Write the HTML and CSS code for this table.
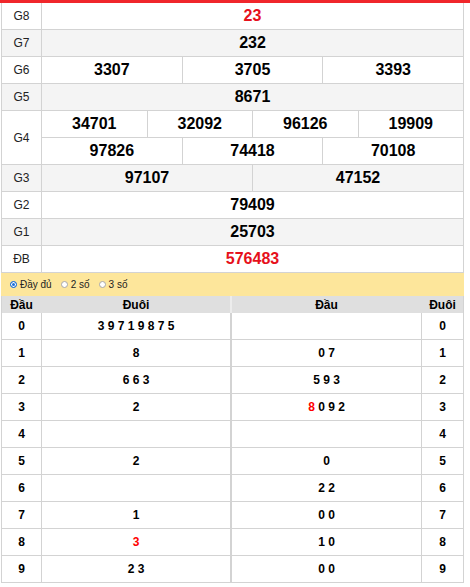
FILE: index.html
```html
<!DOCTYPE html>
<html lang="vi">
<head>
<meta charset="utf-8">
<title>Kết quả xổ số</title>
<link rel="stylesheet" href="styles.css">
</head>
<body>
<div class="topbar"></div>
<div class="wrap">
  <div class="results">
    <div class="row">
      <div class="label">G8</div>
      <div class="nums"><div class="line"><span class="n red">23</span></div></div>
    </div>
    <div class="row alt">
      <div class="label">G7</div>
      <div class="nums"><div class="line"><span class="n">232</span></div></div>
    </div>
    <div class="row">
      <div class="label">G6</div>
      <div class="nums"><div class="line"><span class="n">3307</span><span class="n">3705</span><span class="n">3393</span></div></div>
    </div>
    <div class="row alt">
      <div class="label">G5</div>
      <div class="nums"><div class="line"><span class="n">8671</span></div></div>
    </div>
    <div class="row">
      <div class="label">G4</div>
      <div class="nums">
        <div class="line"><span class="n">34701</span><span class="n">32092</span><span class="n">96126</span><span class="n">19909</span></div>
        <div class="line"><span class="n">97826</span><span class="n">74418</span><span class="n">70108</span></div>
      </div>
    </div>
    <div class="row alt">
      <div class="label">G3</div>
      <div class="nums"><div class="line"><span class="n">97107</span><span class="n">47152</span></div></div>
    </div>
    <div class="row">
      <div class="label">G2</div>
      <div class="nums"><div class="line"><span class="n">79409</span></div></div>
    </div>
    <div class="row alt">
      <div class="label">G1</div>
      <div class="nums"><div class="line"><span class="n">25703</span></div></div>
    </div>
    <div class="row">
      <div class="label">ĐB</div>
      <div class="nums"><div class="line"><span class="n red">576483</span></div></div>
    </div>
  </div>

  <div class="options">
    <span class="opt"><span class="radio on"></span>Đầy đủ</span>
    <span class="opt"><span class="radio"></span>2 số</span>
    <span class="opt"><span class="radio"></span>3 số</span>
  </div>

  <div class="lt">
    <div class="lrow head">
      <div class="c1">Đầu</div><div class="c2">Đuôi</div><div class="c3">Đầu</div><div class="c4">Đuôi</div>
    </div>
    <div class="lrow"><div class="c1">0</div><div class="c2">3 9 7 1 9 8 7 5</div><div class="c3"></div><div class="c4">0</div></div>
    <div class="lrow"><div class="c1">1</div><div class="c2">8</div><div class="c3">0 7</div><div class="c4">1</div></div>
    <div class="lrow"><div class="c1">2</div><div class="c2">6 6 3</div><div class="c3">5 9 3</div><div class="c4">2</div></div>
    <div class="lrow"><div class="c1">3</div><div class="c2">2</div><div class="c3"><span class="r">8</span> 0 9 2</div><div class="c4">3</div></div>
    <div class="lrow"><div class="c1">4</div><div class="c2"></div><div class="c3"></div><div class="c4">4</div></div>
    <div class="lrow"><div class="c1">5</div><div class="c2">2</div><div class="c3">0</div><div class="c4">5</div></div>
    <div class="lrow"><div class="c1">6</div><div class="c2"></div><div class="c3">2 2</div><div class="c4">6</div></div>
    <div class="lrow"><div class="c1">7</div><div class="c2">1</div><div class="c3">0 0</div><div class="c4">7</div></div>
    <div class="lrow"><div class="c1">8</div><div class="c2"><span class="r">3</span></div><div class="c3">1 0</div><div class="c4">8</div></div>
    <div class="lrow"><div class="c1">9</div><div class="c2">2 3</div><div class="c3">0 0</div><div class="c4">9</div></div>
  </div>
</div>
</body>
</html>
```
FILE: styles.css
```css
* { box-sizing: border-box; }
html, body { margin: 0; padding: 0; background: #fff; }
body { font-family: "Liberation Sans", Arial, sans-serif; color: #000; }

.topbar { height: 3px; background: #f0262b; }

.wrap { margin-left: 1px; width: 463px; }

.results { border-left: 1px solid #d3d3d3; border-right: 1px solid #d3d3d3; }

.row { display: flex; border-bottom: 1px solid #d3d3d3; background: #fff; }
.row.alt { background: #f4f4f4; }

.label {
  width: 40px;
  flex: none;
  border-right: 1px solid #d3d3d3;
  display: flex;
  align-items: center;
  justify-content: center;
  font-size: 12px;
  color: #222;
}

.nums { flex: 1; display: flex; flex-direction: column; }
.line { display: flex; height: 26px; }
.line + .line { height: 27px; border-top: 1px solid #d3d3d3; }

.n {
  flex: 1;
  display: flex;
  align-items: center;
  justify-content: center;
  font-size: 16px;
  font-weight: bold;
}
.n + .n { border-left: 1px solid #d3d3d3; }
.n.red { color: #e6101b; }

.options {
  height: 23px;
  background: #fde69b;
  display: flex;
  align-items: center;
  padding-left: 9px;
  gap: 9px;
  font-size: 10px;
  color: #222;
}
.opt { display: inline-flex; align-items: center; gap: 3px; }
.radio {
  width: 7px;
  height: 7px;
  border-radius: 50%;
  border: 1px solid #a8a8a8;
  background: #fff;
}
.radio.on {
  border-color: #1b6fd8;
  background: #1b6fd8;
  box-shadow: inset 0 0 0 1px #fff;
}

.lt { border-left: 1px solid #d3d3d3; border-right: 1px solid #d3d3d3; }
.lrow { display: flex; height: 27px; border-bottom: 1px solid #d3d3d3; font-size: 12px; font-weight: bold; }
.lrow > div { display: flex; align-items: center; justify-content: center; white-space: pre; }
.c1 { width: 40px; border-right: 1px solid #d3d3d3; }
.c2 { width: 190px; border-right: 2px solid #d3d3d3; }
.c3 { width: 190px; border-right: 1px solid #d3d3d3; }
.c4 { flex: 1; }
.lrow.head { height: 17px; background: #dfdfdf; border-bottom: none; }
.lrow.head .c1, .lrow.head .c3 { border-right-color: #dfdfdf; }
.lrow.head .c2 { border-right-color: #ececec; }
.r { color: #f00; }
```
